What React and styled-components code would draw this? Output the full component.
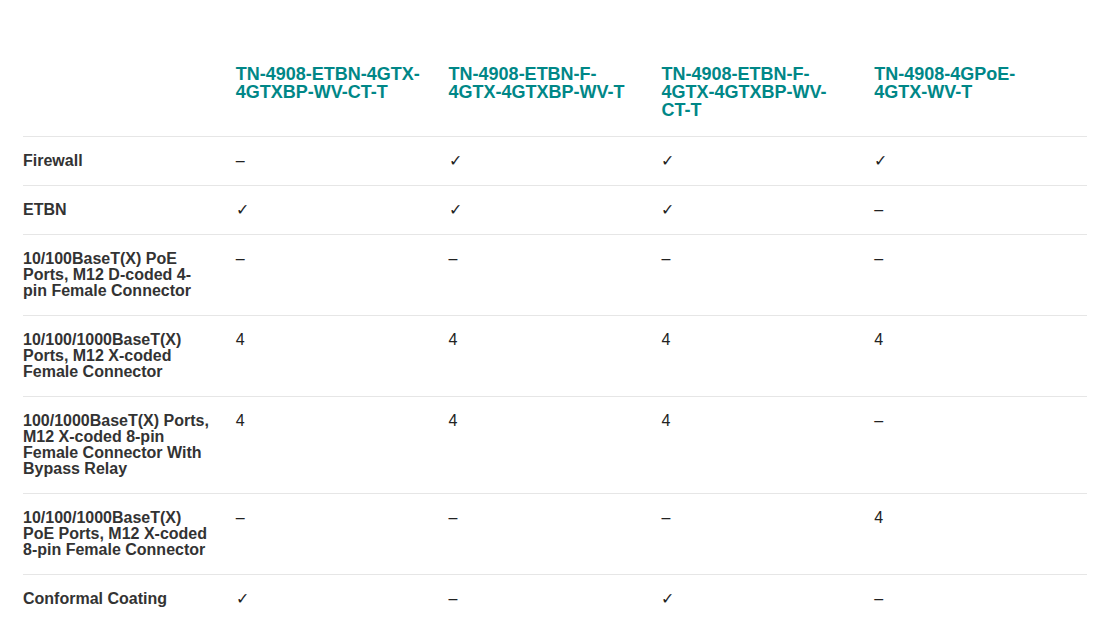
import React from "react";
import styled, { createGlobalStyle } from "styled-components";

const Global = createGlobalStyle`
  html, body { margin: 0; padding: 0; background: #fff; }
  body { font-family: "Liberation Sans", Arial, sans-serif; color: #333; }
`;

const Page = styled.div`
  padding: 49px 17px 0 23px;
`;

const Table = styled.table`
  width: 1064px;
  border-collapse: collapse;
  table-layout: fixed;
`;

const HeadCell = styled.th`
  text-align: left;
  vertical-align: top;
  padding: 16px 22px 17px 0;
  font-size: 18px;
  line-height: 18px;
  font-weight: bold;
  color: #008787;
  border-bottom: 1px solid #e6e6e6;
`;

const Row = styled.tr`
  border-bottom: 1px solid ${(p) => (p.$last ? "transparent" : "#e6e6e6")};
`;

const Label = styled.th`
  text-align: left;
  vertical-align: top;
  padding: 16px 22px 16px 0;
  font-size: 16px;
  line-height: 16px;
  font-weight: bold;
  color: #333;
`;

const Value = styled.td`
  vertical-align: top;
  padding: 16px 22px 16px 0;
  font-size: 16px;
  line-height: 16px;
  color: #222;
`;

const Check = styled.span`
  font-family: "DejaVu Sans", sans-serif;
  font-size: 16px;
  font-weight: 300;
`;

const models = [
  "TN-4908-ETBN-4GTX-4GTXBP-WV-CT-T",
  "TN-4908-ETBN-F-4GTX-4GTXBP-WV-T",
  "TN-4908-ETBN-F-4GTX-4GTXBP-WV-CT-T",
  "TN-4908-4GPoE-4GTX-WV-T",
];

const Y = "✓";
const N = "–";

const rows = [
  ["Firewall", [N, Y, Y, Y]],
  ["ETBN", [Y, Y, Y, N]],
  ["10/100BaseT(X) PoE Ports, M12 D-coded 4-pin Female Connector", [N, N, N, N]],
  ["10/100/1000BaseT(X) Ports, M12 X-coded Female Connector", ["4", "4", "4", "4"]],
  ["100/1000BaseT(X) Ports, M12 X-coded 8-pin Female Connector With Bypass Relay", ["4", "4", "4", N]],
  ["10/100/1000BaseT(X) PoE Ports, M12 X-coded 8-pin Female Connector", [N, N, N, "4"]],
  ["Conformal Coating", [Y, N, Y, N]],
];

export default function App() {
  return (
    <>
      <Global />
      <Page>
        <Table>
          <thead>
            <tr>
              <HeadCell />
              {models.map((m) => (
                <HeadCell key={m}>{m}</HeadCell>
              ))}
            </tr>
          </thead>
          <tbody>
            {rows.map(([label, vals], i) => (
              <Row key={label} $last={i === rows.length - 1}>
                <Label>{label}</Label>
                {vals.map((v, j) => (
                  <Value key={j}>{v === Y ? <Check>{v}</Check> : v}</Value>
                ))}
              </Row>
            ))}
          </tbody>
        </Table>
      </Page>
    </>
  );
}
